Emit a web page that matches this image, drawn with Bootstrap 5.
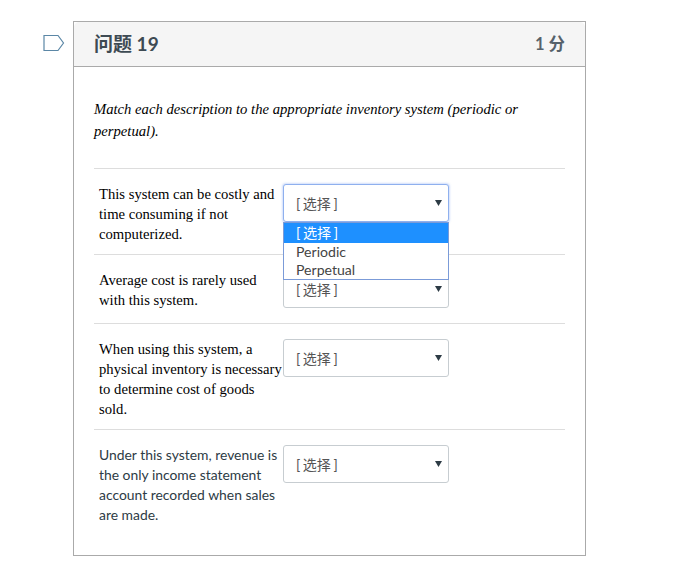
<!DOCTYPE html>
<html lang="zh">
<head>
  <meta charset="UTF-8">
  <meta name="viewport" content="width=device-width, initial-scale=1.0">
  <title>问题 19</title>
  <link href="https://cdn.jsdelivr.net/npm/bootstrap@5.3.0/dist/css/bootstrap.min.css" rel="stylesheet">
  <style>
    body { background: #fff; font-family: Lato, "Noto Sans CJK SC", sans-serif; color: #2d3b45; }
    .quiz-wrap { width: 513px; margin: 21px 0 0 73px; position: relative; }
    .quiz-flag { position: absolute; left: -30px; top: 13px; }
    .quiz-card { border: 1px solid #aaa; border-radius: 0; }
    .quiz-head { height: 45px; padding: 0 20px; background: #f5f5f5; border-bottom: 1px solid #aaa; font-weight: 700; color: #3d4a53; border-radius: 0; }
    .quiz-title { font-size: 19px; }
    .quiz-points { font-size: 16.5px; color: #56616a; }
    .quiz-body { padding: 31px 20px 20px; }
    .quiz-intro { font-family: "Liberation Serif", "Noto Sans CJK SC", serif; font-style: italic; font-size: 14.67px; line-height: 22px; color: #000; margin: 0 0 26px; }
    .match-row { display: flex; border-top: 1px solid #ddd; padding: 15px 0 0 5px; }
    .match-text { width: 184px; flex: none; font-size: 14.67px; line-height: 20px; padding-bottom: 10px; font-family: "Liberation Serif", serif; color: #000; }
    .match-text.match-sans { font-family: Lato, sans-serif; font-size: 13.9px; color: #2d3b45; }
    .match-select { width: 166px; height: 38px; padding: 0 28px 0 12px; font-size: 14px; word-spacing: -1px; color: #555; border: 1px solid #c7cdd1; border-radius: 3px; font-family: Lato, "Noto Sans CJK SC", sans-serif;
      background-image: url("data:image/svg+xml,%3Csvg xmlns='http://www.w3.org/2000/svg' width='7' height='6'%3E%3Cpath d='M0 0h7L3.5 6z' fill='%232d3b45'/%3E%3C/svg%3E");
      background-position: right 6px top 15px; background-size: 7px 6px; }
    .match-select.is-open { border-color: #8fb0ee; box-shadow: 0 0 2px 1px rgba(120,160,240,.35); }
    .match-pick { position: relative; flex: none; padding-bottom: 15px; }
    .match-list { position: absolute; left: 0; top: 38px; width: 166px; background: #fff; border: 1px solid #7b9bd8; font-size: 14.1px; line-height: 18px; color: #444; z-index: 5; }
    .match-list div { padding: 0 12px; height: 18px; }
    .match-list .match-on { background: #1e90ff; color: #fff; height: 20px; line-height: 20px; word-spacing: -1px; }
  </style>
</head>
<body>

  <div class="quiz-wrap">
    <!-- Marcador de la pregunta -->
    <svg class="quiz-flag" width="22" height="18" viewBox="0 0 22 18">
      <path d="M1 1.5h14L20.5 9l-5.5 7.5H1z" fill="#fff" stroke="#5b87a6" stroke-width="1.2"/>
    </svg>

    <div class="card quiz-card">
      <div class="card-header quiz-head d-flex justify-content-between align-items-center">
        <span class="quiz-title">问题 19</span>
        <span class="quiz-points">1 分</span>
      </div>
      <div class="card-body quiz-body">
        <p class="quiz-intro">Match each description to the appropriate inventory system (periodic or perpetual).</p>

        <div class="match-row">
          <div class="match-text">This system can be costly and time consuming if not computerized.</div>
          <div class="match-pick">
            <select class="form-select match-select is-open"><option>[ 选择 ]</option></select>
            <div class="match-list">
              <div class="match-on">[ 选择 ]</div>
              <div>Periodic</div>
              <div>Perpetual</div>
            </div>
          </div>
        </div>

        <div class="match-row">
          <div class="match-text">Average cost is rarely used with this system.</div>
          <div class="match-pick">
            <select class="form-select match-select"><option>[ 选择 ]</option></select>
          </div>
        </div>

        <div class="match-row">
          <div class="match-text">When using this system, a physical inventory is necessary to determine cost of goods sold.</div>
          <div class="match-pick">
            <select class="form-select match-select"><option>[ 选择 ]</option></select>
          </div>
        </div>

        <div class="match-row">
          <div class="match-text match-sans">Under this system, revenue is the only income statement account recorded when sales are made.</div>
          <div class="match-pick">
            <select class="form-select match-select"><option>[ 选择 ]</option></select>
          </div>
        </div>
      </div>
    </div>
  </div>

  <script src="https://cdn.jsdelivr.net/npm/bootstrap@5.3.0/dist/js/bootstrap.bundle.min.js"></script>
</body>
</html>
